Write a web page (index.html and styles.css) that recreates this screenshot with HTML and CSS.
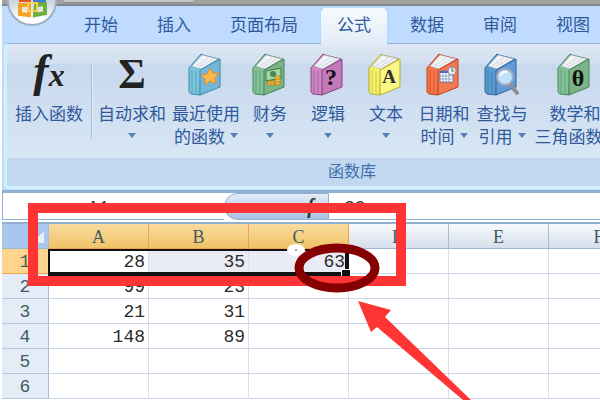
FILE: index.html
```html
<!DOCTYPE html>
<html lang="zh-CN">
<head>
    <meta charset="UTF-8">
    <meta name="viewport" content="width=device-width, initial-scale=1.0">
    <title>公式</title>
    <link rel="stylesheet" href="styles.css">
</head>
<body>
    <svg class="defs" aria-hidden="true">
        <symbol id="book" viewBox="0 0 36 44">
            <path class="spine" d="M1 15 L13 1 L15 2 L31 6 L13 18 L12 42 L3 41 Q1 40 1 38 Z"/>
            <path d="M4 13 L14 2 L30 6 L13 16 Z" fill="#f1f3f6" stroke="#a9b0b8" stroke-width=".6"/>
            <path d="M8 13 L20 5 M11 14 L25 6" stroke="#c3c9d0" stroke-width=".7"/>
            <path class="cover" d="M12 17 L32 6 L32 34 L12 42 Z"/>
            <path class="rib" d="M4 17 V40 M8 18 V41"/>
        </symbol>
        <symbol id="arrow" viewBox="0 0 8 5">
            <path d="M0 0 H8 L4 5 Z" fill="#5580b8"/>
        </symbol>
    </svg>

    <div class="window">
        <header class="titlebar">
            <div class="quick-access"></div>
            <button class="office" aria-label="Office">
                <svg viewBox="0 0 50 50" width="50" height="50">
                    <defs>
                        <linearGradient id="orb" x1="0" y1="0" x2="0" y2="1">
                            <stop offset=".4" stop-color="#c3ccd9"/>
                            <stop offset=".9" stop-color="#ffffff"/>
                        </linearGradient>
                    </defs>
                    <circle cx="25" cy="25" r="24" fill="url(#orb)" stroke="#a3aebf" stroke-width="2"/>
                    <g fill="none" stroke-width="4">
                        <path d="M22 14 H14 V24 H22 Z" stroke="#e4572b"/>
                        <path d="M28 14 H37 V26 H28 Z" stroke="#3e7fc9"/>
                        <path d="M22 29 H13 V38 L22 39 Z" stroke="#f5a51d"/>
                        <path d="M29 29 L38 28 V37 L28 39 Z" stroke="#6dae3d"/>
                        <path d="M21 27 H30 V35 H21 Z" stroke="#fbd04e" stroke-width="2"/>
                    </g>
                </svg>
            </button>
        </header>

        <nav class="tabs">
            <button class="tab">开始</button>
            <button class="tab">插入</button>
            <button class="tab">页面布局</button>
            <button class="tab active">公式</button>
            <button class="tab">数据</button>
            <button class="tab">审阅</button>
            <button class="tab">视图</button>
        </nav>

        <section class="ribbon">
            <div class="tools">
                <button class="tool insert">
                    <span class="icon fx">f<small>x</small></span>
                    <span>插入函数</span>
                </button>
                <div class="separator"></div>
                <button class="tool sum">
                    <span class="icon sigma">Σ</span>
                    <span>自动求和</span>
                    <span class="line"><svg class="arrow"><use href="#arrow"/></svg></span>
                </button>
                <button class="tool recent">
                    <svg class="icon blue" viewBox="0 0 36 44">
                        <use href="#book"/>
                        <path d="M22 15 L25 20 L31 20 L27 25 L28 31 L22 28 L17 32 L17 26 L13 22 L19 21 Z" fill="#fdb84b" stroke="#d98a2c"/>
                    </svg>
                    <span>最近使用</span>
                    <span class="line">的函数<svg class="arrow"><use href="#arrow"/></svg></span>
                </button>
                <button class="tool">
                    <svg class="icon green" viewBox="0 0 36 44">
                        <use href="#book"/>
                        <path d="M14 18 L29 15 V25 L14 28 Z" fill="#a6d69a" stroke="#3b7a4c"/>
                        <ellipse cx="21" cy="21" rx="3" ry="3" fill="#458a57"/>
                        <path d="M23 23 H28 V32 H23 Z M15 28 H23 V32 H15 Z" fill="#f2be3d" stroke="#a87c1c" stroke-width=".7"/>
                        <path d="M23 26 H28 M23 29 H28 M15 30 H23" stroke="#a87c1c" stroke-width=".7"/>
                    </svg>
                    <span>财务</span>
                    <span class="line"><svg class="arrow"><use href="#arrow"/></svg></span>
                </button>
                <button class="tool">
                    <svg class="icon purple" viewBox="0 0 36 44">
                        <use href="#book"/>
                        <text x="21" y="32" class="glyph">?</text>
                    </svg>
                    <span>逻辑</span>
                    <span class="line"><svg class="arrow"><use href="#arrow"/></svg></span>
                </button>
                <button class="tool">
                    <svg class="icon yellow" viewBox="0 0 36 44">
                        <use href="#book"/>
                        <text x="21" y="30" class="glyph letter">A</text>
                    </svg>
                    <span>文本</span>
                    <span class="line"><svg class="arrow"><use href="#arrow"/></svg></span>
                </button>
                <button class="tool">
                    <svg class="icon orange" viewBox="0 0 36 44">
                        <use href="#book"/>
                        <path d="M14 18 H27 V29 H14 Z" fill="#fff" stroke="#5a6fa8" stroke-width=".8"/>
                        <path d="M14 19 H24" stroke="#4a74c4" stroke-width="2"/>
                        <path d="M14 23 H27 M14 26 H27 M17 20 V29 M20 20 V29 M23 20 V29" stroke="#7b93c8" stroke-width=".8"/>
                        <circle cx="26" cy="18" r="4" fill="#eef0f4" stroke="#8a8f9a"/>
                        <path d="M26 15 V18 H28" fill="none" stroke="#333" stroke-width=".8"/>
                    </svg>
                    <span>日期和</span>
                    <span class="line">时间<svg class="arrow"><use href="#arrow"/></svg></span>
                </button>
                <button class="tool">
                    <svg class="icon navy" viewBox="0 0 36 44">
                        <use href="#book"/>
                        <path d="M26 31 L33 40" stroke="#8b8f96" stroke-width="4" stroke-linecap="round"/>
                        <circle cx="21" cy="24" r="8" fill="#bfe0fb" stroke="#9fa9ba" stroke-width="2"/>
                        <path d="M16 23 Q18 18 23 19" fill="none" stroke="#fff" stroke-width="2"/>
                    </svg>
                    <span>查找与</span>
                    <span class="line">引用<svg class="arrow"><use href="#arrow"/></svg></span>
                </button>
                <button class="tool math">
                    <svg class="icon green" viewBox="0 0 36 44">
                        <use href="#book"/>
                        <text x="21" y="33" class="glyph">θ</text>
                    </svg>
                    <span>数学和</span>
                    <span class="line">三角函数<svg class="arrow"><use href="#arrow"/></svg></span>
                </button>
            </div>
            <div class="group-name">函数库</div>
        </section>

        <div class="formula-bar">
            <input class="name-box" aria-label="名称框" value="A1">
            <div class="formula-buttons">
                <span class="dot"></span>
                <button class="fx-small" aria-label="插入函数">f</button>
            </div>
            <input class="formula" aria-label="编辑栏" value="28">
        </div>

        <div class="sheet">
            <table>
                <thead>
                    <tr>
                        <th class="corner"><svg viewBox="0 0 12 12" width="12" height="12"><path d="M12 0 V12 H0 Z" fill="#e6eefa"/></svg></th>
                        <th class="picked">A</th>
                        <th class="picked">B</th>
                        <th class="picked">C</th>
                        <th>D</th>
                        <th>E</th>
                        <th>F</th>
                    </tr>
                </thead>
                <tbody>
                    <tr><th class="picked">1</th><td>28</td><td class="shade">35</td><td class="shade">63</td><td></td><td></td><td></td></tr>
                    <tr><th>2</th><td>99</td><td>23</td><td></td><td></td><td></td><td></td></tr>
                    <tr><th>3</th><td>21</td><td>31</td><td></td><td></td><td></td><td></td></tr>
                    <tr><th>4</th><td>148</td><td>89</td><td></td><td></td><td></td><td></td></tr>
                    <tr><th>5</th><td></td><td></td><td></td><td></td><td></td><td></td></tr>
                    <tr><th>6</th><td></td><td></td><td></td><td></td><td></td><td></td></tr>
                </tbody>
            </table>
            <div class="selection"></div>
        </div>
    </div>

    <!-- red markers over the sheet -->
    <svg class="marks" width="600" height="400" viewBox="0 0 600 400" aria-hidden="true">
        <rect x="33" y="208" width="368" height="73" fill="none" stroke="#ff3535" stroke-width="10"/>
        <ellipse cx="296" cy="250" rx="9" ry="6" fill="#fff"/>
        <circle cx="296" cy="250" r="1" fill="#888"/>
        <ellipse cx="337" cy="268" rx="38" ry="20" fill="none" stroke="#850000" stroke-width="9"/>
        <path d="M358 301 L391 310 L385 317 L471 400 H463 L377 327 L371 332 Z" fill="#ff3535"/>
    </svg>
</body>
</html>
```

FILE: styles.css
```css
* {
    box-sizing: border-box;
}

body {
    margin: 0;
    overflow: hidden;
    background: #fff;
    font-family: "Noto Sans CJK SC", sans-serif;
    font-size: 17px;
    color: #2f599c;
}

button, input {
    font: inherit;
    color: inherit;
    border: none;
    background: none;
    padding: 0;
    margin: 0;
}

.defs {
    position: absolute;
    width: 0;
    height: 0;
}

.window {
    margin-left: 2px;
    overflow: hidden;
    background: #bfdbff;
}

/* title bar */
.titlebar {
    position: relative;
    height: 6px;
    padding-left: 62px;
    background: #a3a19d;
    border-bottom: 2px solid #80868f;
}

.quick-access {
    width: 130px;
    height: 3px;
    background: #c9c9c9;
    border-bottom: 1px solid #858585;
    border-radius: 0 0 8px 0;
}

.office {
    position: absolute;
    left: 5px;
    top: -24px;
    height: 50px;
}

.office svg {
    display: block;
}

/* tabs */
.tabs {
    display: flex;
    gap: 7px;
    height: 37px;
    padding: 2px 0 0 66px;
}

.tab {
    flex: none;
    height: 36px;
    padding: 0 16px 4px;
    line-height: 32px;
    border-radius: 5px 5px 0 0;
}

.tab.active {
    position: relative;
    height: 38px;
    padding-bottom: 6px;
    background: linear-gradient(#f6faff, #e2ebf6);
    box-shadow: 0 0 3px #8fdcf5;
    clip-path: inset(-3px -3px 0 -3px);
}

/* ribbon */
.ribbon {
    min-width: 694px;
    margin-left: 2px;
    border: 1px solid #8fb4e0;
    border-bottom: 3px solid #d0f0fa;
    border-left: 3px solid #d0f0fa;
    border-radius: 5px;
    background: #c2d8f0;
}

.tools {
    display: flex;
    height: 114px;
    padding: 9px 0 0;
    background: linear-gradient(#dfe8f3, #d2dff0 17%, #c8d8ed 18%, #d8e7f4);
}

.tool {
    flex: none;
    display: flex;
    flex-direction: column;
    align-items: center;
    width: 58px;
    line-height: 23px;
    white-space: nowrap;
}

.tool.insert {
    width: 84px;
}

.tool.sum {
    width: 78px;
}

.tool.recent {
    width: 70px;
}

.tool.math {
    width: 88px;
}

.separator {
    width: 2px;
    height: 76px;
    margin-top: 10px;
    border-left: 1px solid #9ebbe0;
    border-right: 1px solid #e6eff9;
}

.icon {
    flex: none;
    width: 36px;
    height: 44px;
    margin-bottom: 4px;
}

.fx, .sigma {
    font-family: "Liberation Serif", serif;
    font-weight: bold;
    font-size: 42px;
    line-height: 42px;
    color: #222;
    text-align: center;
}

.fx {
    font-style: italic;
    font-size: 46px;
    line-height: 36px;
}

.fx small {
    font-size: 32px;
}

.line {
    display: flex;
    align-items: center;
    gap: 5px;
    height: 23px;
}

.arrow {
    width: 8px;
    height: 5px;
}

.spine {
    fill: var(--spine);
    stroke: var(--edge);
}

.cover {
    fill: var(--cover);
    stroke: var(--edge);
}

.rib {
    stroke: var(--edge);
    opacity: .5;
}

.blue {
    --spine: #7cc4dd;
    --cover: #74b7dc;
    --edge: #3c88a8;
}

.green {
    --spine: #83c297;
    --cover: #7db487;
    --edge: #3f8759;
}

.purple {
    --spine: #cf86c4;
    --cover: #c579bd;
    --edge: #87457f;
}

.yellow {
    --spine: #f5f06a;
    --cover: #fbf784;
    --edge: #b5ab2e;
}

.orange {
    --spine: #f4764a;
    --cover: #f27a52;
    --edge: #c2431a;
}

.navy {
    --spine: #5b9bd0;
    --cover: #6299d6;
    --edge: #2b649c;
}

.glyph {
    font-family: "Liberation Serif", serif;
    font-weight: bold;
    font-size: 24px;
    text-anchor: middle;
    fill: #111;
}

.letter {
    font-size: 19px;
    fill: #333;
}

.group-name {
    height: 28px;
    line-height: 24px;
    text-align: center;
    font-size: 16px;
    color: #416fae;
}

/* formula bar */
.formula-bar {
    display: flex;
    height: 33px;
    margin-top: 1px;
    border-top: 3px solid #8fafd3;
    border-bottom: 1px solid #8fafd3;
    background: #fff;
    font-family: "Liberation Mono", monospace;
    font-size: 18px;
    color: #333;
}

.name-box {
    width: 222px;
    padding-right: 30px;
    text-align: center;
    border-left: 1px solid #8fafd3;
}

.formula-buttons {
    display: flex;
    align-items: center;
    justify-content: space-between;
    width: 105px;
    padding: 0 14px 0 8px;
    border: 1px solid #8fafd3;
    border-radius: 14px 0 0 14px;
    background: linear-gradient(#e4ecf7, #a9c2e6);
}

.formula-buttons, .name-box, .formula {
    height: 27px;
    border-bottom: 1px solid #8fafd3;
}

.name-box, .formula {
    padding-top: 4px;
}

.dot {
    width: 8px;
    height: 8px;
    border-radius: 50%;
    background: #9fb2cc;
}

.fx-small {
    font: italic bold 20px "Liberation Serif", serif;
}

.formula {
    flex: 1;
    min-width: 0;
    padding-left: 15px;
}

/* sheet */
.sheet {
    position: relative;
    border-top: 1px solid #8fafd3;
    background: #fff;
}

table {
    table-layout: fixed;
    width: 647px;
    border-collapse: separate;
    border-spacing: 0;
    font-family: "Liberation Mono", monospace;
    font-size: 18px;
}

th, td {
    height: 25px;
    padding: 2px 0 0;
    line-height: 20px;
}

td {
    padding-right: 3px;
    border-right: 1px solid #d7deed;
    border-bottom: 1px solid #cdd6e8;
    text-align: right;
    color: #2b2b2b;
}

th {
    font-weight: normal;
    color: #3f5c5c;
}

thead th {
    width: 100px;
    border-right: 1px solid #a5bdd8;
    border-bottom: 1px solid #9db7d4;
    background: linear-gradient(#f7fafc, #d5deeb);
    font-family: "Liberation Serif", serif;
}

thead .picked {
    border-color: #f2a04a;
    background: linear-gradient(#fadca0, #efc266);
}

thead .corner {
    width: 47px;
    padding-right: 4px;
    text-align: right;
    background: #a9c6ee;
}

tbody th {
    border-right: 1px solid #a5bdd8;
    border-bottom: 1px solid #b4c8e0;
    background: #e4ecf7;
}

tbody .picked {
    border-color: #f2a04a;
    background: #ffd58d;
}

td.shade {
    background: #e9ecf5;
}

.selection {
    position: absolute;
    left: 46px;
    top: 25px;
    width: 301px;
    height: 27px;
    border: 2px solid #111;
    border-right-width: 4px;
    border-bottom-width: 4px;
}

.selection::after {
    content: "";
    position: absolute;
    right: -6px;
    bottom: -6px;
    width: 8px;
    height: 7px;
    border: 1px solid #fff;
    background: #111;
}

.marks {
    position: absolute;
    left: 0;
    top: 0;
}
```
